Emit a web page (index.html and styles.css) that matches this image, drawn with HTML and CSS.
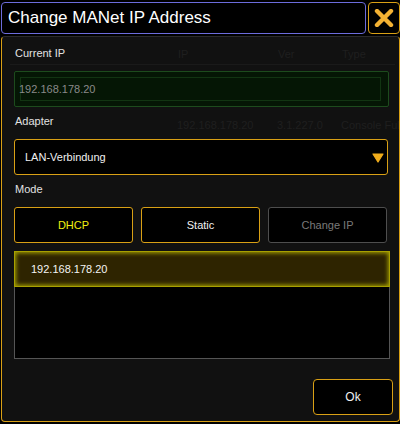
FILE: index.html
```html
<!DOCTYPE html>
<html>
<head>
<meta charset="utf-8">
<link rel="stylesheet" href="styles.css">
</head>
<body>
<div class="header">
  <div class="title">Change MANet IP Address</div>
  <div class="close">
    <svg width="20" height="18" viewBox="0 0 20 18"><path d="M3 2 L17 16 M17 2 L3 16" stroke="#f4b233" stroke-width="4.4" stroke-linecap="round" fill="none"/></svg>
  </div>
</div>
<div class="panel">
  <div class="ghost">
    <div class="ghost-head">
      <span class="g-ip">IP</span><span class="g-ver">Ver</span><span class="g-type">Type</span>
    </div>
    <div class="ghost-row">
      <span class="g-ip">192.168.178.20</span><span class="g-ver">3.1.227.0</span><span class="g-type">Console Full</span>
    </div>
  </div>
  <div class="label first">Current IP</div>
  <div class="ipfield"><div class="ipinner"></div><span class="iptext">192.168.178.20</span></div>
  <div class="label">Adapter</div>
  <div class="select"><span>LAN-Verbindung</span>
    <svg class="arrow" width="12" height="10" viewBox="0 0 12 10"><path d="M1 1 L11 1 L6 9 Z" fill="#f0ad1c" stroke="#f0ad1c" stroke-width="1.2" stroke-linejoin="round"/></svg>
  </div>
  <div class="label">Mode</div>
  <div class="modes">
    <div class="btn dhcp">DHCP</div>
    <div class="btn static">Static</div>
    <div class="btn disabled">Change IP</div>
  </div>
  <div class="list">
    <div class="row sel">192.168.178.20</div>
  </div>
  <div class="ok">Ok</div>
</div>
</body>
</html>
```
FILE: styles.css
```css
* { box-sizing: border-box; }
html, body { margin: 0; padding: 0; background: #000; }
body {
  width: 400px; height: 424px; overflow: hidden;
  font-family: "Liberation Sans", Arial, sans-serif;
  color: #e6e6e6;
}
.header {
  display: flex;
  gap: 2px;
  padding: 2px 0 0 1px;
  height: 34px;
}
.title {
  width: 365px;
  height: 32px;
  border: 1px solid #6c6cdc;
  border-radius: 4px;
  background: #000;
  color: #fff;
  font-size: 17px;
  line-height: 30px;
  padding-left: 6px;
}
.close {
  width: 32px;
  height: 32px;
  border: 1px solid #d9a015;
  border-radius: 4px;
  display: flex;
  align-items: center;
  justify-content: center;
  background: #000;
}
.panel {
  position: relative;
  margin: 2px 0 0 1px;
  width: 399px;
  height: 386px;
  border: 1px solid #d9a015;
  border-top-color: #2a2a2a;
  border-radius: 4px;
  background: #111;
  display: flex;
  flex-direction: column;
  padding: 0 10px 0 12px;
}
.ghost {
  position: absolute;
  left: 0; top: 0; right: 0;
  color: #1f1f1f;
  font-size: 11px;
  z-index: 0;
  overflow: hidden;
  height: 110px;
}
.ghost-head {
  height: 28px;
  border-bottom: 1px solid #1a1a1a;
  margin: 0 4px 0 8px;
  position: relative;
}
.ghost-row { position: relative; height: 20px; margin-top: 52px; }
.ghost span { position: absolute; white-space: nowrap; }
.ghost-head span { top: 11px; }
.ghost-row span { top: 2px; }
.ghost-head .g-ip { left: 168px; }
.ghost-head .g-ver { left: 268px; }
.ghost-head .g-type { left: 332px; }
.ghost-row .g-ip { left: 175px; }
.ghost-row .g-ver { left: 275px; }
.ghost-row .g-type { left: 339px; }
.label, .ipfield, .select, .modes, .list, .ok { position: relative; z-index: 1; }
.label {
  font-size: 11px;
  line-height: 14px;
  height: 32px;
  padding: 7px 0 0 1px;
  color: #e2e2e2;
}
.label.first { height: 34px; padding-top: 9px; }
.ipfield {
  height: 36px;
  width: 375px;
  border: 1px solid #1d4b1d;
  border-radius: 2px;
  background: #051605;
  display: flex;
  align-items: center;
  padding-left: 4px;
}
.ipinner {
  position: absolute;
  left: 5px; top: 5px; right: 7px; bottom: 5px;
  border: 1px solid #123412;
}
.iptext { font-size: 11px; color: #8a8a8a; position: relative; }
.select {
  height: 36px;
  width: 374px;
  border: 1px solid #d9a015;
  border-radius: 3px;
  background: #000;
  display: flex;
  align-items: center;
  justify-content: space-between;
  padding: 0 3px 0 10px;
  font-size: 11px;
  color: #f0f0f0;
}
.arrow { margin-top: 2px; }
.modes {
  display: flex;
  gap: 8px;
  height: 36px;
}
.btn {
  width: 119px;
  height: 36px;
  border: 1px solid #d9a015;
  border-radius: 3px;
  background: #000;
  display: flex;
  align-items: center;
  justify-content: center;
  font-size: 11px;
  color: #f0f0f0;
}
.btn.dhcp { color: #f2ef10; }
.btn.disabled { border-color: #4e4e4e; color: #7a7a7a; }
.list {
  margin-top: 8px;
  height: 108px;
  width: 376px;
  border: 1px solid #555;
  background: #000;
}
.row {
  height: 36px;
  margin: -1px -1px 0 -1px;
  display: flex;
  align-items: center;
  padding-left: 16px;
  font-size: 11px;
  color: #f4f4f4;
}
.row.sel {
  background: #2e2400;
  border: 1px solid #a8a000;
  box-shadow: inset 0 0 4px 1px #a8a200;
}
.ok {
  margin-top: 20px;
  align-self: flex-end;
  margin-right: -4px;
  width: 80px;
  height: 36px;
  border: 1px solid #d9a015;
  border-radius: 4px;
  background: #000;
  display: flex;
  align-items: center;
  justify-content: center;
  font-size: 12px;
  color: #f0f0f0;
}
```
